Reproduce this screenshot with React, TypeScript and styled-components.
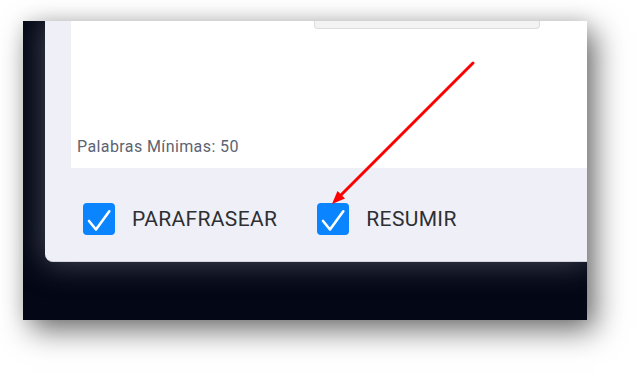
import React from 'react';
import styled, { createGlobalStyle } from 'styled-components';

const Global = createGlobalStyle`
  html, body { margin: 0; padding: 0; background: #ffffff; }
  body { font-family: Roboto, "Noto Sans", Arial, sans-serif; }
`;

const Stage = styled.div`
  position: relative;
  width: 641px;
  height: 372px;
  overflow: hidden;
  padding: 21px 0 0 23px;
  box-sizing: border-box;
  background: #ffffff;
`;

const Window = styled.div`
  width: 564px;
  height: 299px;
  box-sizing: border-box;
  padding-left: 22px;
  background: #040816;
  box-shadow: 8px 10px 28px rgba(0, 0, 0, 0.58), 0 -2px 16px rgba(0, 0, 0, 0.07);
  overflow: hidden;
`;

const Panel = styled.div`
  height: 241px;
  box-sizing: border-box;
  background: #efeff8;
  border-bottom: 1px solid #d4d5de;
  border-bottom-left-radius: 8px;
  box-shadow: 0 0 30px 2px rgba(85, 90, 105, 0.75);
  display: flex;
  flex-direction: column;
`;

const Card = styled.div`
  margin-left: 26px;
  height: 147px;
  background: #ffffff;
  display: flex;
  flex-direction: column;
  padding: 0 0 13px 6px;
  box-sizing: border-box;
`;

const TopField = styled.div`
  margin-left: 237px;
  width: 226px;
  height: 8px;
  box-sizing: border-box;
  background: #f3f3f4;
  border: 1px solid #dcdcdf;
  border-top: none;
  border-radius: 0 0 4px 4px;
`;

const MinWords = styled.div`
  margin-top: auto;
  font-size: 16px;
  line-height: 16px;
  letter-spacing: 0.4px;
  color: #5c6372;
`;

const Options = styled.div`
  display: flex;
  align-items: center;
  padding: 35px 0 0 38px;
  gap: 40px;
`;

const Option = styled.label`
  display: flex;
  align-items: center;
  gap: 17px;
  font-size: 21px;
  line-height: 32px;
  letter-spacing: 0.35px;
  color: #2e2f33;
`;

const Box = styled.span`
  width: 32px;
  height: 32px;
  border-radius: 4px;
  background: #0a84ff;
  display: flex;
  align-items: center;
  justify-content: center;
`;

const Overlay = styled.svg`
  position: absolute;
  left: 0;
  top: 0;
  pointer-events: none;
`;

const Check = () => (
  <svg width="32" height="32" viewBox="0 0 32 32">
    <polyline points="6,18 13,26.5 26.3,8.3" fill="none" stroke="#ffffff" strokeWidth="2.6" strokeLinecap="round" strokeLinejoin="round" />
  </svg>
);

export default function App() {
  return (
    <>
      <Global />
      <Stage>
        <Window>
          <Panel>
            <Card>
              <TopField />
              <MinWords>Palabras Mínimas: 50</MinWords>
            </Card>
            <Options>
              <Option>
                <Box><Check /></Box>
                PARAFRASEAR
              </Option>
              <Option>
                <Box><Check /></Box>
                RESUMIR
              </Option>
            </Options>
          </Panel>
        </Window>
        <Overlay width="641" height="372" viewBox="0 0 641 372">
          <line x1="473" y1="63" x2="341" y2="195" stroke="#ff0000" strokeWidth="3" strokeLinecap="round" />
          <polygon points="332,204 345,198.5 337.5,191" fill="#ff0000" />
        </Overlay>
      </Stage>
    </>
  );
}
